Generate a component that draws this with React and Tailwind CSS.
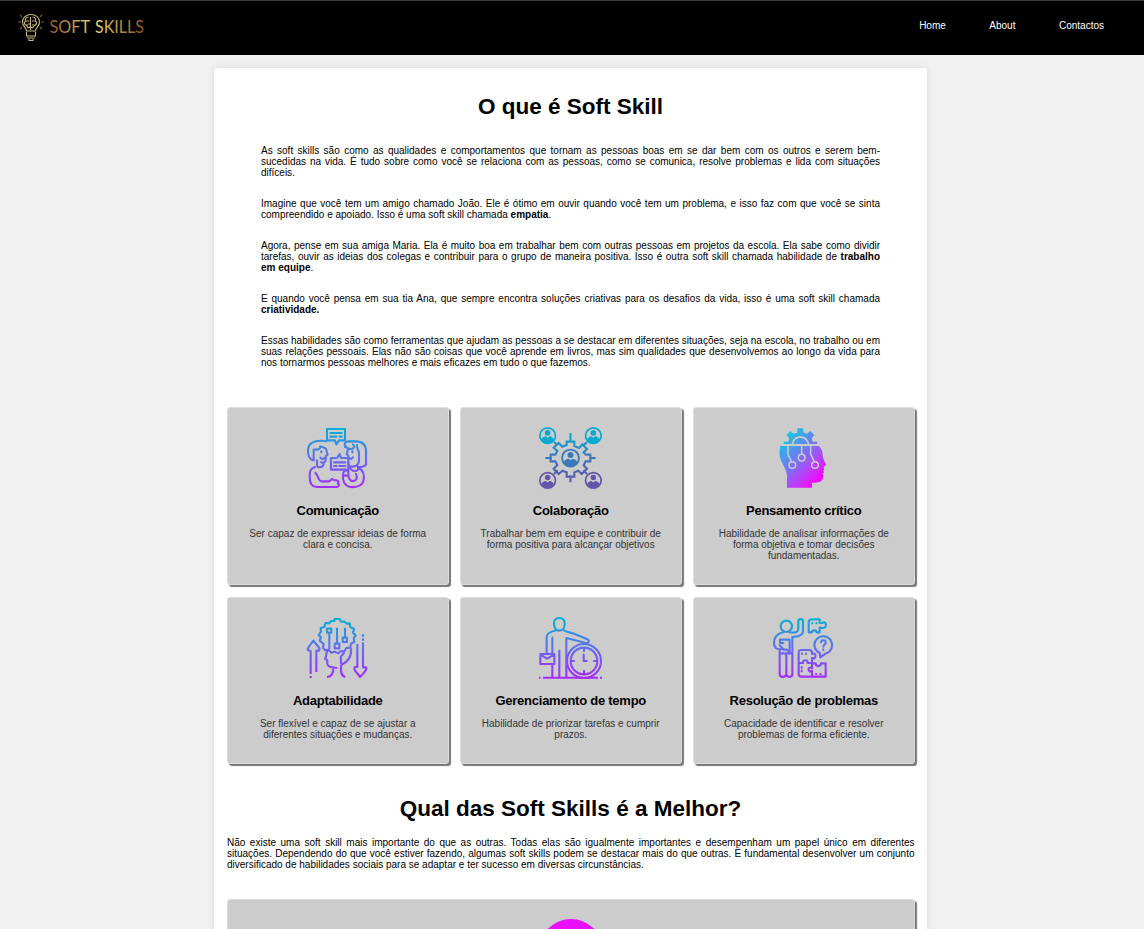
import React from 'react';

const stroke = { fill: 'none', strokeWidth: 6.3, strokeLinecap: 'round', strokeLinejoin: 'round' };

function Icon({ id, stops, diagonal, children }) {
  return (
    <svg viewBox="0 0 240 240" className="-ml-px block h-20 w-20 shrink-0">
      <defs>
        <linearGradient id={id} gradientUnits="userSpaceOnUse" x1={diagonal ? 55 : 120} y1={diagonal ? 75 : 30} x2={diagonal ? 165 : 120} y2={diagonal ? 185 : 212}>
          {stops.map((c, i) => (
            <stop key={c} offset={i / (stops.length - 1)} stopColor={c} />
          ))}
        </linearGradient>
      </defs>
      {children}
    </svg>
  );
}

const violet = ['#00b4d2', '#6070ee', '#a42bff'];

function Communication() {
  return (
    <Icon id="g1" stops={violet}>
      <g {...stroke} stroke="url(#g1)">
        <path d="M90 36H144V70H126L118 82L114 70H90ZM100 48H134M100 59H118M128 59H134" />
        <path d="M88 73C70 69 34 70 33 98C32 114 38 128 50 130M50 128V98H60C68 98 70 92 70 88C78 92 88 91 88 99L92 113L86 118V128C86 137 79 138 72 136M60 130V145C60 153 76 153 80 142M73 103V106M70 122C74 128 79 126 82 123" />
        <path d="M54 150C39 154 38 166 38 179C38 200 44 210 60 210H119C127 210 128 201 122 199C128 194 122 188 113 190L105 186L97 193H74C63 193 66 178 55 167" />
        <path d="M102 123H120L128 111L132 123H154V158H102ZM111 136H145M111 147H119M127 147H145" />
        <path d="M144 90C141 80 144 73 156 73H176C198 73 207 86 207 103V143C202 150 188 151 183 149M144 86C149 94 153 97 162 96C173 96 172 84 168 82M180 84C176 92 186 98 186 108V131C185 142 178 149 166 149C158 149 154 144 154 140M153 97L149 111L154 116V122M166 103V106M154 121C160 128 164 126 168 121M183 149V158C174 168 161 160 158 150" />
        <path d="M185 153C202 161 202 181 199 193C194 211 175 211 160 210C142 207 136 190 138 174C139 160 144 159 154 162V176C156 191 166 195 174 190C182 187 179 176 177 171M139 176H153" />
      </g>
    </Icon>
  );
}

function Person({ x, y, r, paint }) {
  const s = r / 24;
  return (
    <g transform={`translate(${x} ${y}) scale(${s})`}>
      <circle r="22.500" fill="none" stroke={paint} strokeWidth="5" />
      <circle cy="-8" r="8" fill={paint} />
      <path d="M-18 13C-16 4 -9 2 -5 2L0 6L5 2C11 2 17 6 18 13C8 25 -8 25 -18 13Z" fill={paint} />
    </g>
  );
}

function Collaboration() {
  return (
    <Icon id="g2" stops={['#00b7d3', '#3979bc', '#6d4ca3']}>
      <g {...stroke} strokeLinejoin="miter" strokeLinecap="butt" stroke="url(#g2)">
        <path d="M110 74H133V87L147 93L157 82L171 96L161 106L167 113H181V133H167L161 145L171 155L155 171L145 161L133 166V179H110V166L97 161L86 171L71 155L82 144L76 133H62V113H76L82 102L71 92L86 78L97 89L110 84Z" />
        <path d="M121.500 48V75M121.500 179V196M46 123H65M178 123H197M72 75L83 85M171 75L160 86M72 171L83 160M171 171L160 160" />
      </g>
      <Person x={53} y={56} r={25} paint="#0aa9ce" />
      <Person x={190} y={56} r={25} paint="#0aa9ce" />
      <Person x={53} y={190} r={25} paint="#6455a9" />
      <Person x={190} y={190} r={25} paint="#6455a9" />
      <Person x={121.5} y={123} r={27} paint="#3979bc" />
    </Icon>
  );
}

function Thinking() {
  return (
    <Icon id="g3" diagonal stops={['#18c5df', '#5e88f0', '#a451f7', '#ef0dfb']}>
      <path fill="url(#g3)" d="M62 81V74H76L79 64L70 54L82 42L92 50L103 47V34H121V46L132 50L142 42L154 54L146 63L149 74H163V81H139C136 66 125 58 112 58C98 58 89 66 86 81Z" />
      <path fill="url(#g3)" d="M91 81C93 70 101 63 112 63C124 63 132 71 134 81Z" />
      <path fill="url(#g3)" d="M52 87H168C177 96 180 108 179 117L183 130L190 144L182 149V153L184 157L181 161L183 166L179 170L181 178C180 193 171 199 147 197V212H72V174C69 151 54 140 50 116C49 104 50 94 52 87Z" />
      <g fill="none" stroke="#cbcbd4" strokeWidth="4.500">
        <path d="M75 85V113L86 135M116 85V111M143 85V111L154 134" />
        <circle cx="88" cy="144" r="10" />
        <circle cx="116" cy="122" r="10" />
        <circle cx="156" cy="144" r="10" />
      </g>
    </Icon>
  );
}

function Adaptability() {
  return (
    <Icon id="g4" stops={violet}>
      <g {...stroke} stroke="url(#g4)" strokeLinecap="butt">
        <path d="M84 130L78 122L80 111L68 101L72 91L65 84L72 74L71 63L82 60L85 48L97 49L102 42H112L113 36H128L131 43L143 44L148 50L158 49L160 61L171 65L168 77L176 85L170 94L172 105L162 110L160 122L148 123L142 133L132 132L124 139L113 134L102 137L95 128L84 130Z" />
        <path d="M97 76V126M120 62V110M144 62V92" />
        <path d="M90 65H103V77H90ZM113 110H127V124H113ZM137 92H150V105H137Z" />
        <path d="M93 130C84 139 91 147 84 155L91 160V171C92 181 107 181 121 183M108 182C111 199 102 210 90 210M132 172V155C127 147 137 146 142 136M162 124C164 147 157 163 132 174M132 174C131 194 132 208 145 210" />
        <path d="M58 195V131H66C73 124 59 116 49 101C42 112 33 118 32 128C34 132 41 129 41 133V201M41 207V213" />
        <path d="M181 111V180H173C167 189 181 196 189 210C200 198 212 187 207 181H198V106M198 82V89M198 94V101" />
      </g>
    </Icon>
  );
}

function TimeManagement() {
  return (
    <Icon id="g5" stops={violet}>
      <g {...stroke} stroke="url(#g5)">
        <path d="M88 33C75 33 71 42 72 51C73 64 80 71 88 71C98 71 104 62 104 51C105 41 99 33 88 33Z" />
        <path d="M76 70C65 75 50 76 50 89V139M101 69C108 76 119 75 132 80L171 96C179 99 177 110 168 108L109 93V209M67 92V139M67 174V209M88 131V209" />
        <path d="M31 141H73V171H31ZM31 143L51 155L73 143" />
        <circle cx="162" cy="162" r="51" />
        <circle cx="162" cy="162" r="40" />
        <path d="M162 123V132M162 192V201M123 162H132M192 162H201M161 143V162H170" />
      </g>
      <path d="M39 212H204M27 212H32M210 212H216" stroke="#a32cff" strokeWidth="6" />
    </Icon>
  );
}

function ProblemSolving() {
  return (
    <Icon id="g6" stops={violet}>
      <g {...stroke} stroke="url(#g6)">
        <circle cx="70" cy="58" r="17" />
        <path d="M60 76C38 82 32 94 33 110C34 126 46 128 61 126M61 108H51V98H80V137L72 128H62L50 115M80 76C99 78 106 75 106 65V43C106 34 120 34 120 43V74C120 86 102 89 88 90V202C88 212 72 212 70 202C67 212 51 212 50 202V128M70 139V207M50 139H88" />
        <path d="M137 76V47C137 40 140 37 147 37H170V48H178C185 42 192 50 188 58C185 65 177 63 174 62H170V76H161C161 68 147 68 147 76H137" />
        <path d="M172 151L170 138C155 131 150 113 158 101C169 84 191 84 202 98C214 116 204 136 187 140L172 151M174 106C174 98 188 97 188 107C188 113 181 112 181 119M181 128V129" />
        <path d="M107 168V136C107 132 110 129 115 129H139C145 129 147 134 147 138V141C155 137 159 142 157 150C155 155 151 155 147 153V168H134C136 158 119 156 120 168H107M107 168V202C107 207 111 209 116 209H188V169H174C174 180 158 180 158 169H147V184C138 176 133 188 141 194L147 191V209" />
        <path d="M148 48V49M160 48V49M117 140V141M129 140V141M116 180V182M116 191V193M159 201H160M172 201H173" />
      </g>
    </Icon>
  );
}

const skills = [
  { Art: Communication, title: 'Comunicação', lines: ['Ser capaz de expressar ideias de forma', 'clara e concisa.'] },
  { Art: Collaboration, title: 'Colaboração', lines: ['Trabalhar bem em equipe e contribuir de', 'forma positiva para alcançar objetivos'] },
  { Art: Thinking, title: 'Pensamento crítico', lines: ['Habilidade de analisar informações de', 'forma objetiva e tomar decisões', 'fundamentadas.'] },
  { Art: Adaptability, title: 'Adaptabilidade', lines: ['Ser flexível e capaz de se ajustar a', 'diferentes situações e mudanças.'] },
  { Art: TimeManagement, title: 'Gerenciamento de tempo', lines: ['Habilidade de priorizar tarefas e cumprir', 'prazos.'] },
  { Art: ProblemSolving, title: 'Resolução de problemas', lines: ['Capacidade de identificar e resolver', 'problemas de forma eficiente.'] },
];

const intro = [
  ['As soft skills são como as qualidades e comportamentos que tornam as pessoas boas em se dar bem com os outros e serem bem-', 'sucedidas na vida. É tudo sobre como você se relaciona com as pessoas, como se comunica, resolve problemas e lida com situações', 'difíceis.'],
  ['Imagine que você tem um amigo chamado João. Ele é ótimo em ouvir quando você tem um problema, e isso faz com que você se sinta', <>compreendido e apoiado. Isso é uma soft skill chamada <b>empatia</b>.</>],
  ['Agora, pense em sua amiga Maria. Ela é muito boa em trabalhar bem com outras pessoas em projetos da escola. Ela sabe como dividir', <>tarefas, ouvir as ideias dos colegas e contribuir para o grupo de maneira positiva. Isso é outra soft skill chamada habilidade de <b>trabalho</b></>, <><b>em equipe</b>.</>],
  ['E quando você pensa em sua tia Ana, que sempre encontra soluções criativas para os desafios da vida, isso é uma soft skill chamada', <b>criatividade.</b>],
  ['Essas habilidades são como ferramentas que ajudam as pessoas a se destacar em diferentes situações, seja na escola, no trabalho ou em', 'suas relações pessoais. Elas não são coisas que você aprende em livros, mas sim qualidades que desenvolvemos ao longo da vida para', 'nos tornarmos pessoas melhores e mais eficazes em tudo o que fazemos.'],
];

const best = [
  'Não existe uma soft skill mais importante do que as outras. Todas elas são igualmente importantes e desempenham um papel único em diferentes',
  'situações. Dependendo do que você estiver fazendo, algumas soft skills podem se destacar mais do que outras. É fundamental desenvolver um conjunto',
  'diversificado de habilidades sociais para se adaptar e ter sucesso em diversas circunstâncias.',
];

function Paragraph({ lines }) {
  return (
    <p className="text-[10px] leading-[11px]">
      {lines.map((line, i) => (
        <span key={i} className={i < lines.length - 1 ? 'block whitespace-nowrap [text-align-last:justify]' : 'block whitespace-nowrap'}>
          {line}
        </span>
      ))}
    </p>
  );
}

function Card({ Art, title, lines }) {
  return (
    <article className="flex flex-col items-center rounded-[3px] border border-[#ddd] bg-[#ccc] pt-[9px] text-center shadow-[2px_2px_1px_#777]">
      <Art />
      <h2 className="mt-[6px] text-[13px] leading-4 font-bold tracking-[-0.25px]">{title}</h2>
      <p className="mt-[9px] text-[10px] leading-[11px] text-[#333]">
        {lines.map((line) => (
          <span key={line} className="block whitespace-nowrap">{line}</span>
        ))}
      </p>
    </article>
  );
}

function Logo() {
  return (
    <svg viewBox="0 0 132 36" className="block h-9 w-[132px]">
      <defs>
        <linearGradient id="gold" gradientUnits="userSpaceOnUse" x1="38" y1="0" x2="132" y2="0">
          <stop offset="0" stopColor="#8f592b" />
          <stop offset=".25" stopColor="#c39a4d" />
          <stop offset=".5" stopColor="#e6d47c" />
          <stop offset=".75" stopColor="#b58a43" />
          <stop offset="1" stopColor="#92551f" />
        </linearGradient>
      </defs>
      <g fill="none" stroke="#c9b875" strokeWidth="1.100">
        <path d="M14.500 22C14 18 10.500 17.500 10.500 13C10.500 8.500 14 5.500 19 5.500C24 5.500 27.500 8.500 27.500 13C27.500 17.500 24 18 23.500 22Z" />
        <path d="M14.500 23V27H23.500V23M15 29H23M17 30V31.500H21V30" />
        <path d="M18.500 8V21M16.500 8C13 8 13 11 14 12C11 13 13 17 15 16C15 19 17 19 18 18M20.500 8C24 8 24 11 23 12C26 13 24 17 22 16C22 19 20 19 19 18M15 12H17M20 12H22M16 15H18M20 16H21" />
        <path stroke="#8b572d" d="M9 13H6M29 13H32M10 8L8 6M28 8L30 6M10 18L8 20M28 18L30 20" />
      </g>
      <g fill="url(#gold)" fontFamily="Lato" fontSize="16.500">
        <text x="37.500" y="24.200" textLength="40.500" lengthAdjust="spacingAndGlyphs">SOFT</text>
        <text x="83" y="24.200" textLength="49" lengthAdjust="spacingAndGlyphs">SKILLS</text>
      </g>
    </svg>
  );
}

export default function App() {
  return (
    <div className="h-[929px] overflow-hidden bg-[#f1f1f1] font-['Liberation_Sans',Arial,sans-serif] text-black">
      <header className="flex h-[55px] items-start justify-between border-t border-[#3c3c3c] bg-black pl-3 pr-10 pt-2">
        <Logo />
        <nav className="flex gap-[43.5px] pt-[11px] text-[10px] leading-[11px] text-white">
          <a>Home</a>
          <a>About</a>
          <a>Contactos</a>
        </nav>
      </header>
      <main className="mt-[13px] ml-[214px] h-[900px] w-[713px] rounded-[3px] bg-white px-[13px] pt-[25px] shadow-[0_0_7px_rgba(0,0,0,0.1)]">
        <h1 className="text-center text-[22.5px] leading-7 font-bold">O que é Soft Skill</h1>
        <section className="mt-6 ml-[34px] flex w-[619px] flex-col gap-5">
          {intro.map((lines, i) => <Paragraph key={i} lines={lines} />)}
        </section>
        <section className="mt-[39px] grid w-[688px] grid-cols-[221.5px_221.5px_221.5px] grid-rows-[177.5px_166.5px] gap-x-[11.5px] gap-y-[12.5px]">
          {skills.map((s) => <Card key={s.title} {...s} />)}
        </section>
        <h1 className="mt-[31.5px] text-center text-[22.5px] leading-7 font-bold">Qual das Soft Skills é a Melhor?</h1>
        <section className="mt-[14px] w-[687.5px]">
          <Paragraph lines={best} />
        </section>
        <article className="mt-[29px] flex h-[178px] w-[687.5px] justify-center rounded-[3px] border border-[#ddd] bg-[#ccc] pt-[19px] shadow-[2px_2px_1px_#777]">
          <svg viewBox="0 0 64 64" className="h-16 w-16">
            <circle cx="32" cy="32" r="32" fill="#e810fb" />
          </svg>
        </article>
      </main>
    </div>
  );
}
